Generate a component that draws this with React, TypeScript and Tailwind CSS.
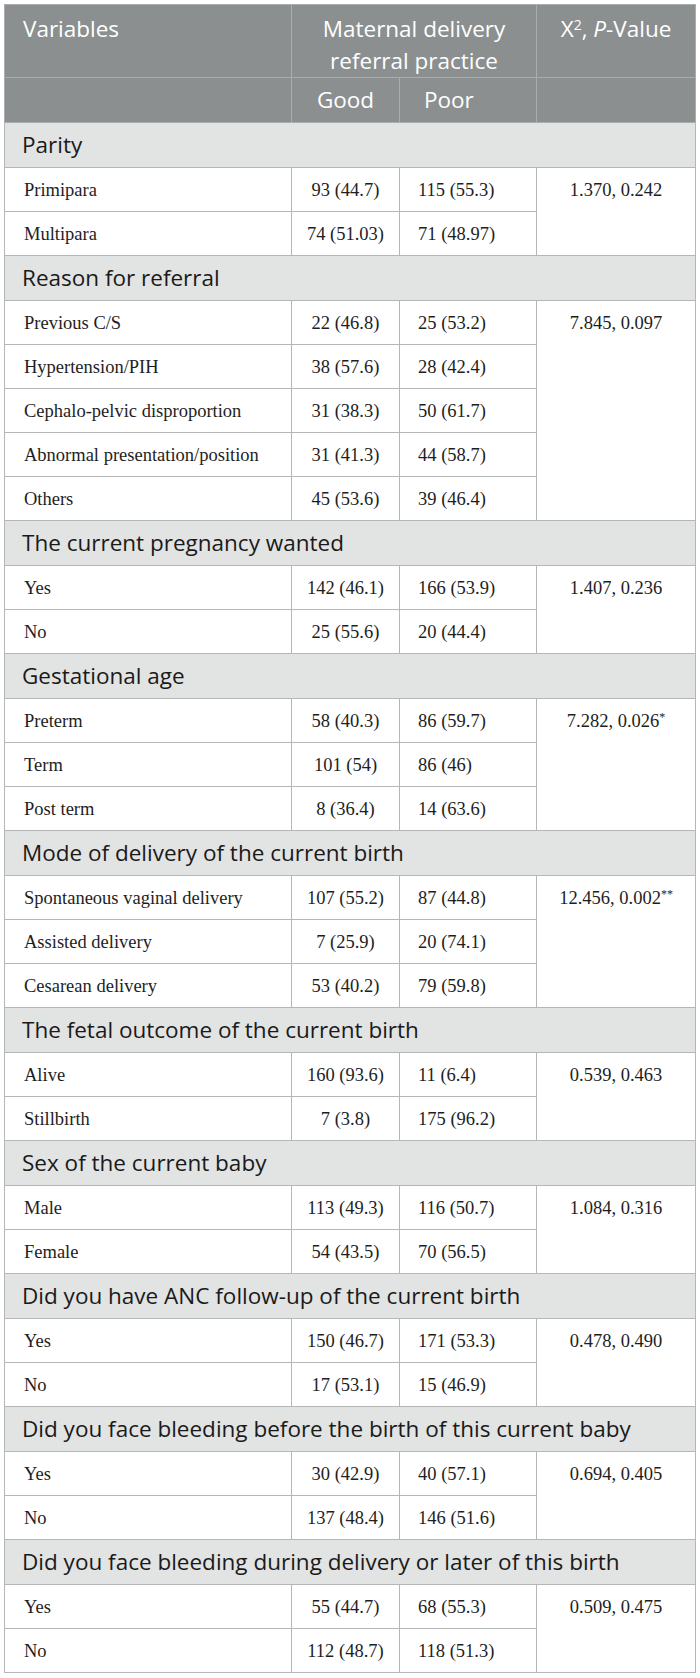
import React from 'react';

type Group = {
  title: string;
  stat: string;
  mark?: string;
  rows: [string, string, string][];
};

const groups: Group[] = [
  {
    title: 'Parity',
    stat: '1.370, 0.242',
    rows: [
      ['Primipara', '93 (44.7)', '115 (55.3)'],
      ['Multipara', '74 (51.03)', '71 (48.97)'],
    ],
  },
  {
    title: 'Reason for referral',
    stat: '7.845, 0.097',
    rows: [
      ['Previous C/S', '22 (46.8)', '25 (53.2)'],
      ['Hypertension/PIH', '38 (57.6)', '28 (42.4)'],
      ['Cephalo-pelvic disproportion', '31 (38.3)', '50 (61.7)'],
      ['Abnormal presentation/position', '31 (41.3)', '44 (58.7)'],
      ['Others', '45 (53.6)', '39 (46.4)'],
    ],
  },
  {
    title: 'The current pregnancy wanted',
    stat: '1.407, 0.236',
    rows: [
      ['Yes', '142 (46.1)', '166 (53.9)'],
      ['No', '25 (55.6)', '20 (44.4)'],
    ],
  },
  {
    title: 'Gestational age',
    stat: '7.282, 0.026',
    mark: '*',
    rows: [
      ['Preterm', '58 (40.3)', '86 (59.7)'],
      ['Term', '101 (54)', '86 (46)'],
      ['Post term', '8 (36.4)', '14 (63.6)'],
    ],
  },
  {
    title: 'Mode of delivery of the current birth',
    stat: '12.456, 0.002',
    mark: '**',
    rows: [
      ['Spontaneous vaginal delivery', '107 (55.2)', '87 (44.8)'],
      ['Assisted delivery', '7 (25.9)', '20 (74.1)'],
      ['Cesarean delivery', '53 (40.2)', '79 (59.8)'],
    ],
  },
  {
    title: 'The fetal outcome of the current birth',
    stat: '0.539, 0.463',
    rows: [
      ['Alive', '160 (93.6)', '11 (6.4)'],
      ['Stillbirth', '7 (3.8)', '175 (96.2)'],
    ],
  },
  {
    title: 'Sex of the current baby',
    stat: '1.084, 0.316',
    rows: [
      ['Male', '113 (49.3)', '116 (50.7)'],
      ['Female', '54 (43.5)', '70 (56.5)'],
    ],
  },
  {
    title: 'Did you have ANC follow-up of the current birth',
    stat: '0.478, 0.490',
    rows: [
      ['Yes', '150 (46.7)', '171 (53.3)'],
      ['No', '17 (53.1)', '15 (46.9)'],
    ],
  },
  {
    title: 'Did you face bleeding before the birth of this current baby',
    stat: '0.694, 0.405',
    rows: [
      ['Yes', '30 (42.9)', '40 (57.1)'],
      ['No', '137 (48.4)', '146 (51.6)'],
    ],
  },
  {
    title: 'Did you face bleeding during delivery or later of this birth',
    stat: '0.509, 0.475',
    rows: [
      ['Yes', '55 (44.7)', '68 (55.3)'],
      ['No', '112 (48.7)', '118 (51.3)'],
    ],
  },
];

const sans = "font-['Open_Sans','Lato',sans-serif]";
const serif = "font-['Liberation_Serif','Times_New_Roman',serif]";

export default function App() {
  return (
    <div className="bg-white w-[700px] h-[1678px] p-1">
      <table className="table-fixed border-collapse w-[691px] border border-[#c4c6c6]">
        <colgroup>
          <col className="w-[287px]" />
          <col className="w-[108px]" />
          <col className="w-[137px]" />
          <col className="w-[159px]" />
        </colgroup>
        <thead className={`${sans} text-white text-[22.5px] leading-[32px] bg-[#8b8f90]`}>
          <tr>
            <th className="h-[73px] border border-[#a9adae] align-top text-left font-normal px-[18px] pt-[8px]">
              Variables
            </th>
            <th
              colSpan={2}
              className="h-[73px] border border-[#a9adae] align-top text-center font-normal pt-[8px]"
            >
              Maternal delivery
              <br />
              referral practice
            </th>
            <th className="h-[73px] border border-[#a9adae] align-top text-center font-normal pt-[8px] whitespace-nowrap">
              X<sup className="text-[14px]">2</sup>, <i>P</i>-Value
            </th>
          </tr>
          <tr>
            <th className="h-[45px] border border-[#a9adae]" />
            <th className="h-[45px] border border-[#a9adae] text-center font-normal">Good</th>
            <th className="h-[45px] border border-[#a9adae] text-left font-normal pl-[24px]">Poor</th>
            <th className="h-[45px] border border-[#a9adae]" />
          </tr>
        </thead>
        <tbody>
          {groups.map((g) => (
            <React.Fragment key={g.title}>
              <tr className="bg-[#e2e3e3]">
                <td
                  colSpan={4}
                  className={`${sans} h-[45px] text-[22.5px] leading-[28px] text-[#1a1a1a] px-[17px] border border-[#b5b7b7] whitespace-nowrap`}
                >
                  {g.title}
                </td>
              </tr>
              {g.rows.map((r, i) => (
                <tr key={r[0]} className={`${serif} text-[18.5px] leading-[24px] text-[#1e1e1e]`}>
                  <td className="h-[44px] border border-[#b5b7b7] px-[19px] whitespace-nowrap">
                    {r[0]}
                  </td>
                  <td className="h-[44px] border border-[#b5b7b7] text-center">{r[1]}</td>
                  <td className="h-[44px] border border-[#b5b7b7] pl-[18px]">{r[2]}</td>
                  {i === 0 && (
                    <td
                      rowSpan={g.rows.length}
                      className="border border-[#b5b7b7] align-top text-center pt-[10px]"
                    >
                      {g.stat}
                      {g.mark && <sup className="text-[12px]">{g.mark}</sup>}
                    </td>
                  )}
                </tr>
              ))}
            </React.Fragment>
          ))}
        </tbody>
      </table>
    </div>
  );
}
